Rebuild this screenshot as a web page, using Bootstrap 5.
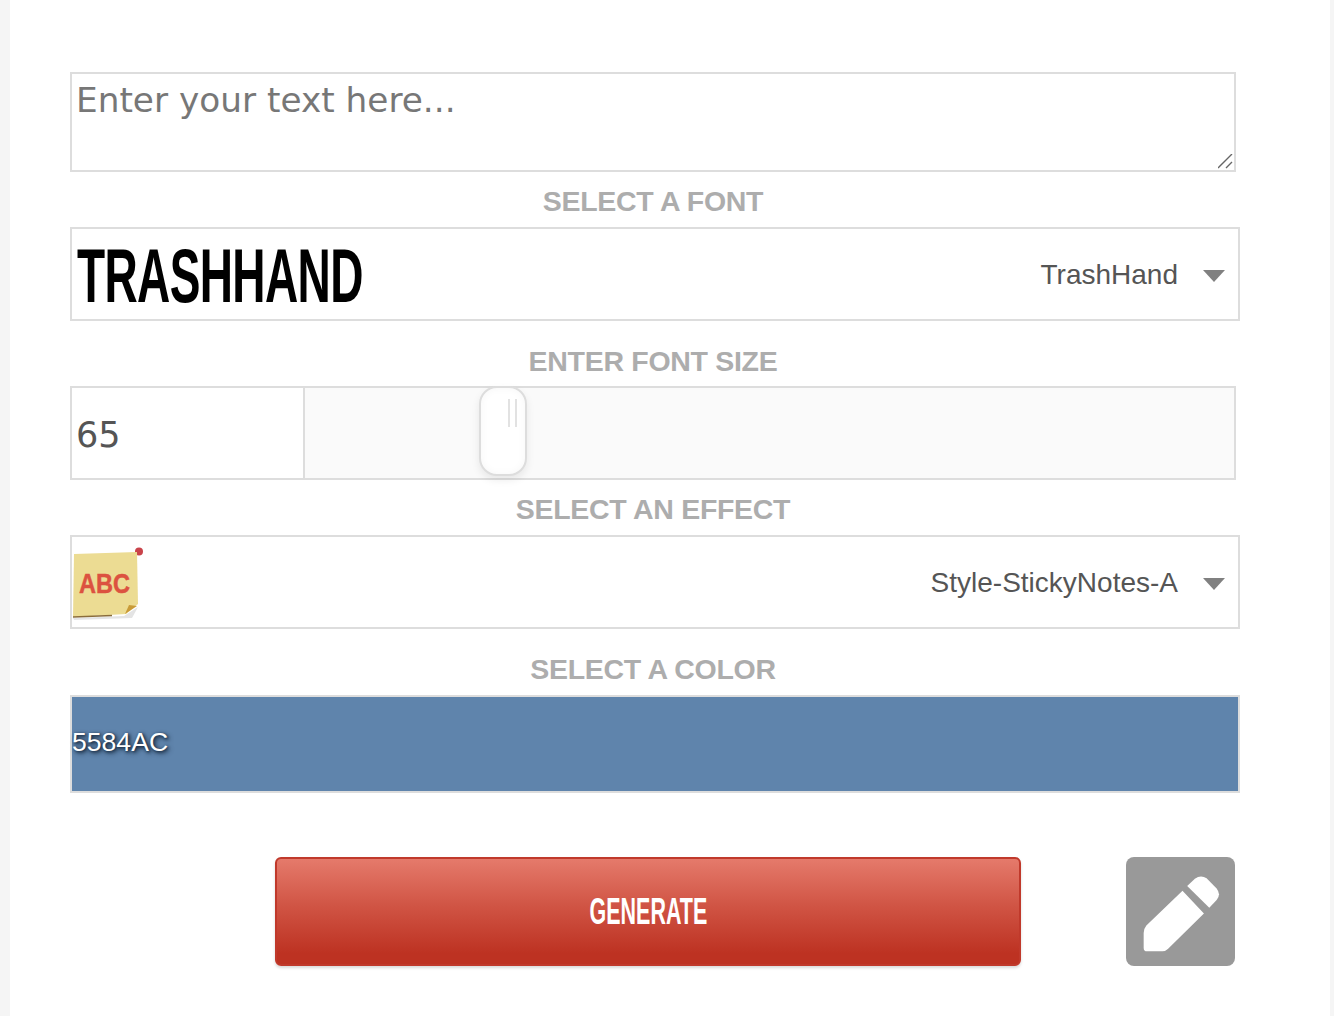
<!DOCTYPE html>
<html lang="en">
<head>
    <meta charset="UTF-8">
    <meta name="viewport" content="width=device-width, initial-scale=1.0">
    <title>Text Generator</title>
    <link rel="stylesheet" href="https://cdn.jsdelivr.net/npm/bootstrap@5.3.0/dist/css/bootstrap.min.css">
    <style>
        html, body { height: 100%; }
        body { background: #f5f5f5; font-family: "Liberation Sans", Arial, sans-serif; overflow: hidden; }
        .sheet { margin-left: 10px; width: 1320px; height: 1016px; background: #fff; padding: 72px 90px 0 60px; }
        .gen-field { border: 2px solid #ddd; background: #fff; border-radius: 0; color: #555; }
        .area-wrap { width: 1166px; height: 100px; }
        .gen-area { display: block; width: 100%; height: 100%; padding: 4px 4px; font: 34.3px/44px "DejaVu Sans", sans-serif; outline: 0; resize: none; }
        .gen-area::placeholder { color: #777; opacity: 1; }
        .area-grip { position: absolute; right: 2px; bottom: 2px; }
        .gen-label { width: 1166px; margin-bottom: 9px; text-align: center; color: #adadad; font-size: 28.5px; font-weight: 700; line-height: 34px; letter-spacing: -.3px; }
        .label-near { margin-top: 12px; }
        .label-far { margin-top: 23px; }
        .gen-select { width: 1170px; height: 94px; padding: 3px 13px 0 5px; }
        .gen-select-text { font-size: 28px; color: #555; margin: -2px 25px 0 0; }
        .gen-caret { width: 0; height: 0; border-left: 11px solid transparent; border-right: 11px solid transparent; border-top: 12px solid #808080; }
        .font-sample { display: inline-block; transform: scaleX(.605); transform-origin: left center; font-weight: 700; font-size: 76px; line-height: 1; color: #000; letter-spacing: -1px; }
        .sticky-icon { margin-left: -5px; overflow: visible; }
        .size-row { width: 1166px; height: 94px; margin-top: -1px; }
        .size-num { width: 233px; border-right: 0; padding: 4px 4px 0; font: 35px "DejaVu Sans", sans-serif; }
        .size-track { background: #fafafa; position: relative; }
        .size-thumb { position: absolute; left: 174px; top: -2px; width: 48px; height: 90px; background: #fff; border: 2px solid #ddd; border-radius: 18px; box-shadow: 0 4px 8px rgba(0,0,0,.08), inset 0 0 8px rgba(0,0,0,.04); }
        .size-thumb::after { content: ""; position: absolute; left: 27px; top: 11px; width: 9px; height: 28px; border-left: 2px solid #e2e2e2; border-right: 2px solid #e2e2e2; }
        .color-box { width: 1170px; height: 98px; padding-bottom: 2px; background: #5f84ac; color: #fff; font-size: 26.6px; text-shadow: 2px 2px 5px #14263b, 1px 1px 3px #14263b; }
        .gen-actions { width: 1165px; margin-top: 64px; padding-left: 205px; }
        .gen-btn { width: 746px; height: 109px; border: 2px solid #c0392b; border-radius: 6px; color: #fff; background: linear-gradient(#e57a6b, #d05444 45%, #bd3222 90%); box-shadow: 0 2px 3px rgba(0,0,0,.15); font-weight: 700; font-size: 37px; }
        .gen-btn:hover { color: #fff; }
        .gen-btn-text { display: inline-block; transform: scaleX(.58); }
        .edit-btn { width: 109px; height: 109px; border-radius: 8px; background: #999; }
        .edit-btn svg { margin: 5px 0 0 2px; }
    </style>
</head>
<body>
<div class="sheet">
    <div class="area-wrap position-relative">
        <textarea class="gen-field gen-area" placeholder="Enter your text here..."></textarea>
        <svg class="area-grip" width="16" height="16" viewBox="0 0 16 16">
            <path d="M0 14 L14 0 M8 14 L14 8" stroke="#666" stroke-width="1.4" fill="none"/>
        </svg>
    </div>

    <div class="gen-label label-near">SELECT A FONT</div>
    <div class="gen-field gen-select d-flex align-items-center justify-content-between">
        <span class="font-sample">TRASHHAND</span>
        <div class="d-flex align-items-center">
            <span class="gen-select-text">TrashHand</span>
            <span class="gen-caret"></span>
        </div>
    </div>

    <div class="gen-label label-far">ENTER FONT SIZE</div>
    <div class="size-row d-flex">
        <div class="gen-field size-num d-flex align-items-center">65</div>
        <div class="gen-field size-track flex-grow-1">
            <div class="size-thumb"></div>
        </div>
    </div>

    <div class="gen-label label-near">SELECT AN EFFECT</div>
    <div class="gen-field gen-select d-flex align-items-center justify-content-between">
        <svg class="sticky-icon" width="72" height="72" viewBox="0 0 72 72">
            <path d="M1 70 L52 68 L66 59 L60 70 L2 72 Z" fill="#e4e4e4"/>
            <circle cx="67" cy="3.5" r="4" fill="#c9434a"/>
            <path d="M2 6 L65 4 L66 56 L54 66 L1 69 Z" fill="#ecdc93"/>
            <path d="M1 69 L40 67.5" stroke="#8a6d3b" stroke-width="1.5" fill="none"/>
            <path d="M53 66 L65 58 L57 57 Z" fill="#c99b38"/>
            <text x="7" y="44.5" font-family="Liberation Sans, sans-serif" font-weight="700" font-size="28" fill="#dc5240" stroke="#dc5240" stroke-width=".5" textLength="51" lengthAdjust="spacingAndGlyphs">ABC</text>
        </svg>
        <div class="d-flex align-items-center">
            <span class="gen-select-text">Style-StickyNotes-A</span>
            <span class="gen-caret"></span>
        </div>
    </div>

    <div class="gen-label label-far">SELECT A COLOR</div>
    <div class="gen-field color-box d-flex align-items-center">5584AC</div>

    <div class="gen-actions d-flex justify-content-between">
        <button class="btn gen-btn" type="button"><span class="gen-btn-text">GENERATE</span></button>
        <a class="edit-btn d-flex align-items-center justify-content-center" href="#">
            <svg width="77" height="76" viewBox="130 108 230 227">
                <path fill="#fff" d="M248 152 L312 220 L205 325 Q197 333 188 333 L142 333 Q132 333 132 323 L132 278 Q132 266 140 256 Z"/>
                <path fill="#fff" d="M262 138 L285 116 Q303 104 320 115 L350 145 Q364 163 350 180 L328 203 Z"/>
            </svg>
        </a>
    </div>
</div>
<script src="https://cdn.jsdelivr.net/npm/bootstrap@5.3.0/dist/js/bootstrap.bundle.min.js"></script>
</body>
</html>
